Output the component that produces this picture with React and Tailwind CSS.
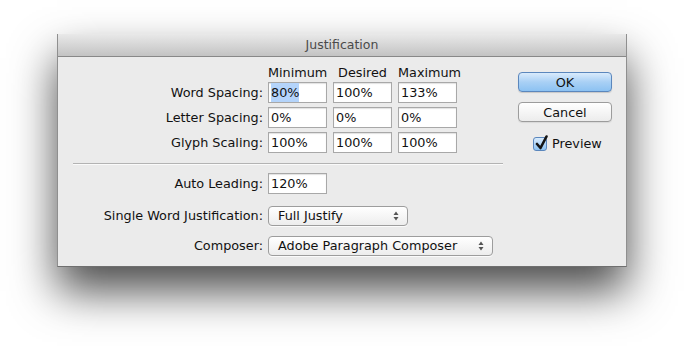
const font = { fontFamily: '"DejaVu Sans", "Liberation Sans", sans-serif' };

const Field = ({ value, selected }) => (
  <div className="w-[59px] h-[21px] bg-white border border-[#a8a8a8] shadow-[inset_0_1px_1px_rgba(0,0,0,0.12)] flex items-center pl-[2px] text-[12.8px] text-[#111]">
    {selected ? <span className="bg-[#b4d4fb]">{value}</span> : <span>{value}</span>}
  </div>
);

const Arrows = () => (
  <svg width="6" height="10" viewBox="0 0 6 10">
    <path d="M3 0.5 L5.5 4 L0.5 4 Z" fill="#555" />
    <path d="M3 9.5 L5.5 6 L0.5 6 Z" fill="#555" />
  </svg>
);

const Popup = ({ label, width }) => (
  <div
    className={`h-[20px] ${width} rounded-[4px] border border-[#9d9d9d] bg-gradient-to-b from-white to-[#ededed] shadow-[0_1px_0_rgba(255,255,255,0.8)] flex items-center justify-between pl-[9px] pr-[8px] text-[12.8px] text-[#111]`}
  >
    <span>{label}</span>
    <Arrows />
  </div>
);

const Row = ({ label, children, className = "" }) => (
  <div className={`flex items-center ${className}`}>
    <div className="w-[205px] text-right text-[12.8px] text-[#111] whitespace-nowrap">{label}</div>
    <div className="ml-[5px] flex gap-[6px]">{children}</div>
  </div>
);

export default function App() {
  return (
    <div className="w-[684px] h-[346px] bg-white overflow-hidden pt-[34px] pl-[57px]" style={font}>
      <div className="w-[570px] h-[233px] bg-[#ebebeb] border-x border-b border-[#8f8f8f] border-b-[#6f6f6f] shadow-[0_24px_42px_rgba(0,0,0,0.7)] flex flex-col">
        {/* title bar */}
        <div className="h-[23px] bg-gradient-to-b from-[#e9e9e9] to-[#c3c3c3] border-b border-[#888] flex items-center justify-center text-[12.5px] text-[#4a4a4a]">
          Justification
        </div>

        <div className="flex flex-1">
          {/* left */}
          <div className="w-[460px] pt-[8px] flex flex-col">
            <div className="h-[17px] flex items-start leading-[16px] pl-[210px] gap-[6px] text-[12.8px] text-[#111]">
              <div className="w-[59px] text-center">Minimum</div>
              <div className="w-[59px] text-center">Desired</div>
              <div className="w-[59px] text-center">Maximum</div>
            </div>
            <div className="flex flex-col gap-[4px]">
              <Row label="Word Spacing:">
                <Field value="80%" selected />
                <Field value="100%" />
                <Field value="133%" />
              </Row>
              <Row label="Letter Spacing:">
                <Field value="0%" />
                <Field value="0%" />
                <Field value="0%" />
              </Row>
              <Row label="Glyph Scaling:">
                <Field value="100%" />
                <Field value="100%" />
                <Field value="100%" />
              </Row>
            </div>

            <div className="mt-[10px] ml-[15px] w-[430px] h-[2px] border-t border-[#b3b3b3] border-b border-b-[#fafafa]" />

            <Row label="Auto Leading:" className="mt-[8px]">
              <Field value="120%" />
            </Row>
            <Row label="Single Word Justification:" className="mt-[12px]">
              <Popup label="Full Justify" width="w-[140px]" />
            </Row>
            <Row label="Composer:" className="mt-[10px]">
              <Popup label="Adobe Paragraph Composer" width="w-[225px]" />
            </Row>
          </div>

          {/* right */}
          <div className="pt-[15px] flex flex-col">
            <button className="w-[94px] h-[20px] rounded-[4px] border border-[#5b87bd] bg-gradient-to-b from-[#d9ebfc] via-[#a9d0f5] to-[#8cc2f2] text-[12.8px] text-[#111] shadow-[0_1px_1px_rgba(0,0,0,0.15)]">
              OK
            </button>
            <button className="mt-[10px] w-[94px] h-[20px] rounded-[4px] border border-[#9c9c9c] bg-gradient-to-b from-white to-[#ececec] text-[12.8px] text-[#111] shadow-[0_1px_1px_rgba(0,0,0,0.08)]">
              Cancel
            </button>
            <div className="mt-[12px] ml-[15px] flex items-center gap-[5px] text-[12.8px] text-[#111]">
              <div className="relative w-[14px] h-[14px] rounded-[3px] border border-[#5b87bd] bg-gradient-to-b from-[#d9ebfc] to-[#8cc2f2]">
                <svg className="absolute left-[1px] -top-[3px]" width="14" height="16" viewBox="0 0 14 16">
                  <path d="M2 9 L5.5 13 L11.5 1.5" fill="none" stroke="#141414" strokeWidth="2.6" strokeLinejoin="round" strokeLinecap="round" />
                </svg>
              </div>
              <span>Preview</span>
            </div>
          </div>
        </div>
      </div>
    </div>
  );
}
